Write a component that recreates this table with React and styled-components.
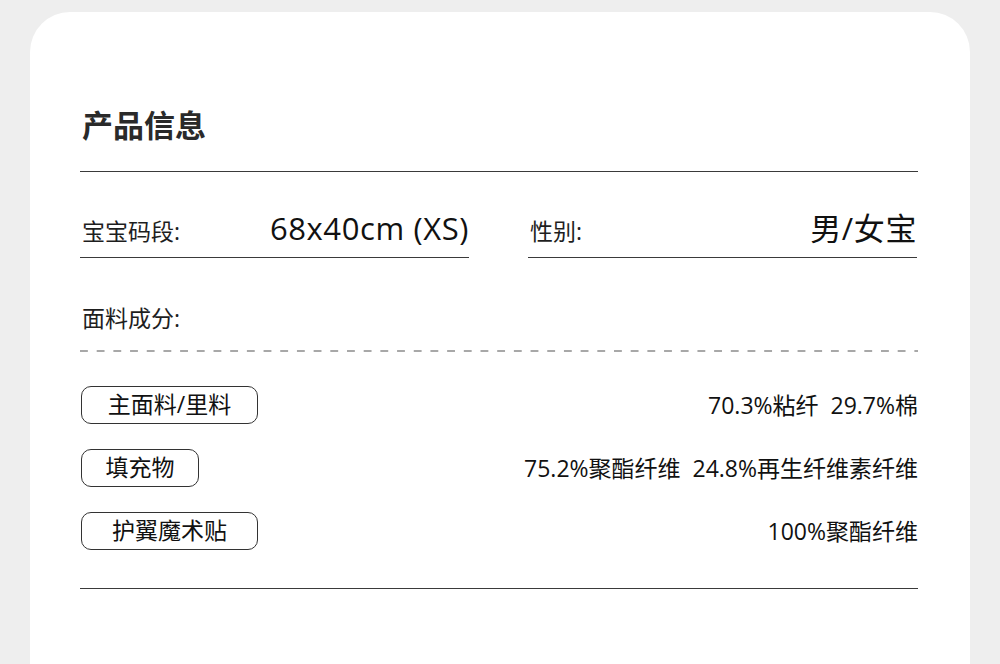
import React from 'react'
import styled, { createGlobalStyle } from 'styled-components'

const GlobalStyle = createGlobalStyle`
  html, body {
    margin: 0;
    padding: 0;
    background: #eeeeee;
    font-family: "Open Sans", "Noto Sans CJK SC", sans-serif;
    color: #1a1a1a;
  }
`

const fields = [
  { label: '宝宝码段:', value: '68x40cm (XS)' },
  { label: '性别:', value: '男/女宝' },
]

const fabrics = [
  { name: '主面料/里料', width: 177, value: '70.3%粘纤\u00a0\u00a029.7%棉' },
  { name: '填充物', width: 118, value: '75.2%聚酯纤维\u00a0\u00a024.8%再生纤维素纤维' },
  { name: '护翼魔术贴', width: 177, value: '100%聚酯纤维' },
]

const App = () => {
  return (
    <>
      <GlobalStyle />
      <Page>
        <Card>
          <Title>产品信息</Title>
          <Rule />
          <FieldGrid>
            {fields.map(f => (
              <Field key={f.label}>
                <Label>{f.label}</Label>
                <Value>{f.value}</Value>
              </Field>
            ))}
          </FieldGrid>
          <Section>面料成分:</Section>
          <Dashed />
          <FabricList>
            {fabrics.map(f => (
              <FabricRow key={f.name}>
                <Pill $width={f.width}>{f.name}</Pill>
                <Amount>{f.value}</Amount>
              </FabricRow>
            ))}
          </FabricList>
          <Rule $gap={38} />
        </Card>
      </Page>
    </>
  )
}

const Page = styled.div`
  height: 664px;
  overflow: hidden;
  padding: 12px 30px 0;
  box-sizing: border-box;
`

const Card = styled.div`
  background: #ffffff;
  border-radius: 40px 40px 0 0;
  height: 700px;
  padding: 90px 52px 0 50px;
  box-sizing: border-box;
`

const Title = styled.h1`
  margin: 0;
  font-family: "Noto Sans CJK SC", sans-serif;
  font-size: 31px;
  line-height: 44px;
  font-weight: 700;
  color: #2a2a2a;
  padding-left: 2px;
`

const Rule = styled.div`
  height: 1px;
  background: #3a3a3a;
  margin-top: ${p => p.$gap || 25}px;
`

const FieldGrid = styled.div`
  display: grid;
  grid-template-columns: 389px 389px;
  column-gap: 59px;
  margin-top: 36px;
`

const Field = styled.div`
  display: flex;
  justify-content: space-between;
  align-items: baseline;
  border-bottom: 1px solid #3a3a3a;
  padding: 0 0 9px 2px;
`

const Label = styled.span`
  font-size: 23px;
  line-height: 30px;
  color: #1e1e1e;
`

const Section = styled.div`
  font-size: 23px;
  line-height: 30px;
  color: #1e1e1e;
  padding-left: 2px;
  margin-top: 45px;
`

const Value = styled.span`
  font-size: 31px;
  line-height: 40px;
  letter-spacing: 0.6px;
  color: #111;
`

const Dashed = styled.div`
  height: 2px;
  margin-top: 17px;
  background-image: linear-gradient(to right, #a8a8a8 0 8px, transparent 8px 16.7px);
  background-size: 16.7px 2px;
`

const FabricList = styled.div`
  display: flex;
  flex-direction: column;
  gap: 25px;
  margin-top: 34px;
`

const FabricRow = styled.div`
  display: flex;
  justify-content: space-between;
  align-items: center;
`

const Pill = styled.div`
  box-sizing: border-box;
  width: ${p => p.$width}px;
  height: 38px;
  margin-left: 1px;
  border: 1px solid #333;
  border-radius: 10px;
  font-size: 23px;
  line-height: 35px;
  text-align: center;
  color: #111;
`

const Amount = styled.div`
  font-size: 23px;
  line-height: 30px;
  color: #111;
`

export default App
